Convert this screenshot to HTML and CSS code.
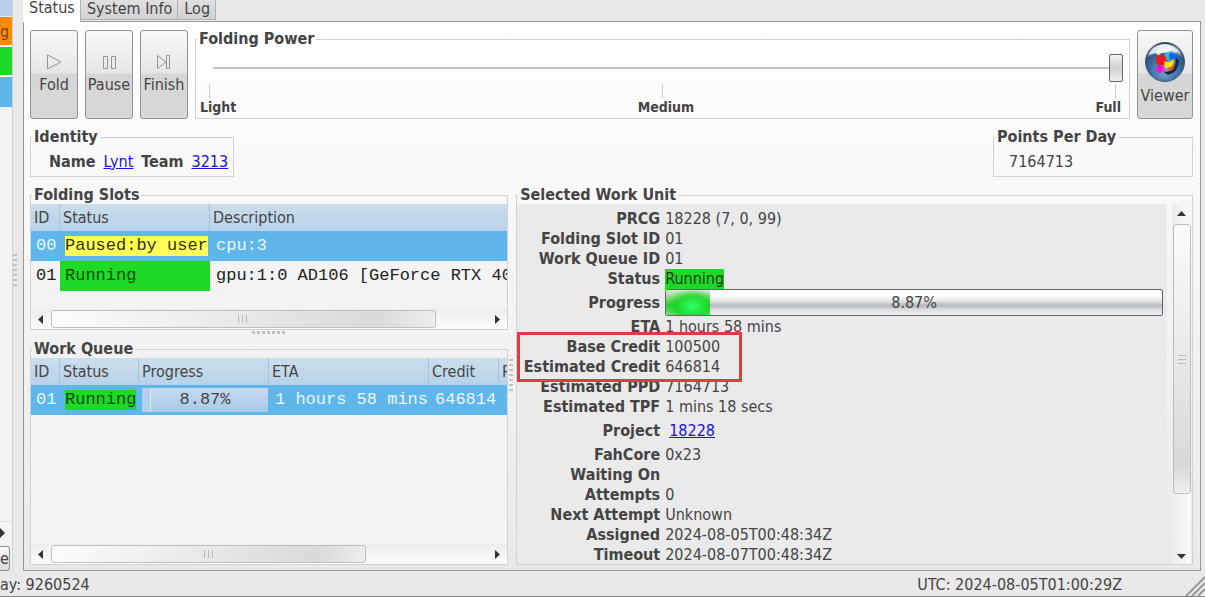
FILE: index.html
```html
<!DOCTYPE html>
<html lang="en">
<head>
<meta charset="utf-8">
<title>FAHControl</title>
<link rel="stylesheet" href="styles.css">
</head>
<body>
<div class="window">
  <div class="workspace">
    <aside class="clients">
      <div class="client-head"></div>
      <div class="client-row updating">g</div>
      <div class="client-row online"></div>
      <div class="client-row chosen"></div>
      <div class="client-fill"></div>
      <div class="client-scroll"><svg width="6" height="10" viewBox="0 0 6 10"><path d="M0 0L5 5L0 10Z" fill="#333"/></svg></div>
      <button class="client-button" type="button">e</button>
    </aside>
    <div class="splitter"><span class="grip grip-v"></span></div>
    <main class="main">
      <nav class="tabs">
        <button class="tab active" type="button">Status</button>
        <button class="tab" type="button">System Info</button>
        <button class="tab" type="button">Log</button>
      </nav>
      <div class="panel">
        <section class="toolbar">
          <button class="tool" type="button">
            <svg width="20" height="20" viewBox="0 0 20 20"><path d="M3.500 3L17 10L3.500 17Z" class="ico"/></svg>Fold</button>
          <button class="tool" type="button">
            <svg width="20" height="20" viewBox="0 0 20 20"><path d="M4.500 4.500H8.500V16.500H4.500ZM12.500 4.500H16.500V16.500H12.500Z" class="ico"/></svg>Pause</button>
          <button class="tool" type="button">
            <svg width="20" height="20" viewBox="0 0 20 20"><path d="M3.500 3.500L12 10L3.500 16.500ZM12.500 3.500H15.500V16.500H12.500Z" class="ico"/></svg>Finish</button>
          <fieldset class="group power">
            <legend>Folding Power</legend>
            <input class="slider" type="range" min="0" max="2" value="2" aria-label="Folding Power">
            <div class="ticks"><i></i><i></i><i></i></div>
            <div class="levels"><span>Light</span><span>Medium</span><span>Full</span></div>
          </fieldset>
          <button class="tool viewer" type="button">
            <svg width="42" height="42" viewBox="0 0 42 42">
              <defs>
                <radialGradient id="globe" cx=".5" cy=".7" r=".7"><stop offset="0" stop-color="#7fb2e0"/><stop offset=".5" stop-color="#3f70a8"/><stop offset="1" stop-color="#1b3558"/></radialGradient>
                <linearGradient id="shine" x2="0" y2="1"><stop offset="0" stop-color="#fff" stop-opacity=".7"/><stop offset="1" stop-color="#fff" stop-opacity=".1"/></linearGradient>
              </defs>
              <circle cx="21" cy="21" r="19.500" fill="url(#globe)" stroke="#4b5a6b"/>
              <path d="M4 14Q9 5 20 3Q31 4 37 13L33 11L30 13L27 9L22 12L18 11L15 15L11 12L8 13Z" fill="#c5d6df"/>
              <path d="M12 12L18 6L20 9L25 5L29 9L24 11L20 12Z" fill="#fff"/>
              <path d="M15 28Q20 33 28 29Q34 23 31 14L35 20Q34 32 24 34Z" fill="#142a3c"/>
              <circle cx="25" cy="15" r="4.500" fill="#28b9ee"/><circle cx="29" cy="15" r="4" fill="#1265e6"/>
              <circle cx="17" cy="19" r="5.500" fill="#ed1822"/>
              <path d="M20 20Q24 23 30 18Q31 27 21 27Z" fill="#ffe40a"/>
              <circle cx="16" cy="28" r="4" fill="#ee17cf"/><circle cx="20" cy="29" r="2" fill="#f33ec0"/>
              <path d="M24 27Q29 26 30 22Q31 29 25 30Z" fill="#e8561a"/>
              <path d="M3 17Q6 3 21 3Q36 3 39 17Q21 5 3 17Z" fill="url(#shine)"/>
            </svg>Viewer</button>
        </section>

        <section class="summary">
          <fieldset class="group identity">
            <legend>Identity</legend>
            <div class="line"><b>Name</b><a href="#">Lynt</a><b>Team</b><a href="#">3213</a></div>
          </fieldset>
          <fieldset class="group ppd">
            <legend>Points Per Day</legend>
            <div class="line">7164713</div>
          </fieldset>
        </section>

        <section class="details">
          <div class="lists">
            <fieldset class="group slots">
              <legend>Folding Slots</legend>
              <div class="list">
                <table>
                  <colgroup><col class="c-id"><col class="c-slot"><col></colgroup>
                  <thead><tr><th>ID</th><th>Status</th><th>Description</th></tr></thead>
                  <tbody>
                    <tr class="selected"><td>00</td><td><span class="tag paused">Paused:by user</span></td><td>cpu:3</td></tr>
                    <tr><td>01</td><td class="running">Running</td><td>gpu:1:0 AD106 [GeForce RTX 4060 Ti]</td></tr>
                  </tbody>
                </table>
              </div>
              <div class="hscroll">
                <svg width="6" height="9" viewBox="0 0 6 9"><path d="M5 0V9L0 4.500Z" fill="#333"/></svg>
                <div class="rail"><div class="thumb wide"><i></i></div></div>
                <svg width="6" height="9" viewBox="0 0 6 9"><path d="M1 0V9L6 4.500Z" fill="#333"/></svg>
              </div>
            </fieldset>
            <div class="row-splitter"><span class="grip grip-h"></span></div>
            <fieldset class="group queue">
              <legend>Work Queue</legend>
              <div class="list">
                <table>
                  <colgroup><col class="c-id"><col class="c-status"><col class="c-progress"><col class="c-eta"><col class="c-credit"><col></colgroup>
                  <thead><tr><th>ID</th><th>Status</th><th>Progress</th><th>ETA</th><th>Credit</th><th>PRCG</th></tr></thead>
                  <tbody>
                    <tr class="selected"><td>01</td><td><span class="tag running">Running</span></td><td class="meter-cell"><div class="cell-meter"><span>8.87%</span></div></td><td>1 hours 58 mins</td><td>646814</td><td>18228 (7, 0, 99)</td></tr>
                  </tbody>
                </table>
              </div>
              <div class="hscroll">
                <svg width="6" height="9" viewBox="0 0 6 9"><path d="M5 0V9L0 4.500Z" fill="#333"/></svg>
                <div class="rail"><div class="thumb narrow"><i></i></div></div>
                <svg width="6" height="9" viewBox="0 0 6 9"><path d="M1 0V9L6 4.500Z" fill="#333"/></svg>
              </div>
            </fieldset>
          </div>
          <div class="column-splitter"><span class="grip grip-v"></span></div>
          <fieldset class="group unit">
            <legend>Selected Work Unit</legend>
            <div class="unit-body">
              <dl class="facts">
                <dt>PRCG</dt><dd>18228 (7, 0, 99)</dd>
                <dt>Folding Slot ID</dt><dd>01</dd>
                <dt>Work Queue ID</dt><dd>01</dd>
                <dt>Status</dt><dd><span class="badge">Running</span></dd>
                <dt class="tall">Progress</dt><dd class="tall"><div class="progress"><div class="progress-fill" style="width:8.87%"></div><span>8.87%</span></div></dd>
                <dt>ETA</dt><dd>1 hours 58 mins</dd>
                <dt>Base Credit</dt><dd>100500</dd>
                <dt>Estimated Credit</dt><dd>646814</dd>
                <dt>Estimated PPD</dt><dd>7164713</dd>
                <dt>Estimated TPF</dt><dd>1 mins 18 secs</dd>
                <dt class="tall">Project</dt><dd class="tall project"><a href="#">18228</a></dd>
                <dt>FahCore</dt><dd>0x23</dd>
                <dt>Waiting On</dt><dd></dd>
                <dt>Attempts</dt><dd>0</dd>
                <dt>Next Attempt</dt><dd>Unknown</dd>
                <dt>Assigned</dt><dd>2024-08-05T00:48:34Z</dd>
                <dt>Timeout</dt><dd>2024-08-07T00:48:34Z</dd>
              </dl>
              <div class="vscroll">
                <svg width="9" height="5" viewBox="0 0 9 5"><path d="M0 5H9L4.500 0Z" fill="#333"/></svg>
                <div class="vrail"><div class="vthumb"><i></i></div></div>
                <svg width="9" height="5" viewBox="0 0 9 5"><path d="M0 0H9L4.500 5Z" fill="#333"/></svg>
              </div>
              <div class="highlight"></div>
            </div>
          </fieldset>
        </section>
      </div>
    </main>
  </div>
  <footer class="statusbar">
    <span>ay: 9260524</span><span>UTC: 2024-08-05T01:00:29Z</span>
    <svg class="resize" width="20" height="20" viewBox="0 0 20 20"><path d="M1 20L20 1M7 20L20 7M13 20L20 13" stroke="#999" stroke-width="2"/></svg>
  </footer>
</div>
</body>
</html>
```
FILE: styles.css
```css
* { box-sizing: border-box; }
body {
  margin: 0;
  color: #444;
  background: #e9e9e9;
  font: 16px/20px "DejaVu Sans Condensed", "Noto Sans", sans-serif;
}
button { font: inherit; color: inherit; padding: 0; }
a { color: #1a12d8; }
svg { display: block; flex: none; }

.window { display: flex; flex-direction: column; height: 100vh; overflow: hidden; }
.workspace { display: flex; flex: 1; min-height: 0; }

/* Client list, cut by the left edge */
.clients { display: flex; flex-direction: column; flex: none; width: 12px; background: #f3f3f3; }
.client-head { height: 17px; background: #b8cfe9; border-bottom: 1px solid #e8e8e8; }
.client-row { height: 30px; line-height: 30px; border-bottom: 2px solid #f5f5f5; }
.updating { background: #ff8a05; color: #7a4300; }
.online { background: #1fd927; }
.chosen { background: #5fb6eb; border: 0; }
.client-fill { flex: 1; border-bottom: 1px solid #ddd; }
.client-scroll { height: 24px; padding-top: 6px; }
.client-button {
  height: 25px;
  width: 10px;
  background: linear-gradient(#f8f8f8, #dcdcdc);
  border: 1px solid #8d8d8d;
  border-left: 0;
  border-radius: 0 3px 3px 0;
}
.splitter {
  display: flex;
  align-items: center;
  flex: none;
  width: 11px;
  padding-bottom: 30px;
  border-left: 1px solid #d0d0d0;
}
.grip { display: block; flex: none; }
.grip-v { width: 4px; height: 34px; background: repeating-linear-gradient(#c2c2bb 0 2px, transparent 2px 5px); }
.grip-h { width: 35px; height: 3px; background: repeating-linear-gradient(90deg, #c2c2bb 0 3px, transparent 3px 5px); }

/* Tabs */
.main { display: flex; flex-direction: column; flex: 1; min-width: 0; margin-right: 4px; }
.tabs { display: flex; height: 21px; align-items: flex-start; }
.tab {
  height: 20px;
  padding: 0 5px 3px 6px;
  line-height: 17px;
  white-space: nowrap;
  background: linear-gradient(#e0e0e0, #d2d2d2);
  border: solid #b0b0b0;
  border-width: 0 1px 1px 0;
}
.tab.active { height: 22px; padding-bottom: 7px; line-height: 15px; background: #fff; border-width: 0 1px 0 0; z-index: 1; }
.panel {
  display: flex;
  flex-direction: column;
  flex: 1;
  min-height: 0;
  padding: 8px 7px 5px 6px;
  gap: 9px;
  background: linear-gradient(#fff, #f3f3f3 55%, #e9e9e9);
  border: 1px solid #999;
}

/* Group boxes */
.group { min-width: 0; margin: 0; padding: 0; border: 1px solid #d2d2d2; }
.group legend { margin-left: 1px; padding: 0 2px; line-height: 18px; font-weight: bold; }

/* Toolbar */
.toolbar { display: flex; gap: 7px; height: 89px; }
.tool {
  display: flex;
  flex-direction: column;
  align-items: center;
  justify-content: center;
  gap: 3px;
  flex: none;
  width: 48px;
  padding-bottom: 2px;
  background: linear-gradient(#f8f8f8, #e6e6e6 48%, #d6d6d6 50%, #d8d8d8);
  border: 1px solid #929292;
  border-radius: 3px;
}
.viewer { width: 56px; }
.ico { fill: none; stroke: #949494; stroke-width: 1; }
.power { flex: 1; }
.slider {
  display: block;
  appearance: none;
  width: calc(100% - 17px);
  height: 28px;
  margin: 6px 6px 0 11px;
  background: transparent;
}
.slider::-webkit-slider-runnable-track { height: 28px; background: linear-gradient(#c2c2c2, #c2c2c2) 6px 50% / 100% 2px no-repeat; }
.slider::-webkit-slider-thumb {
  appearance: none;
  width: 14px;
  height: 28px;
  background: linear-gradient(#f4f4f4, #d0d0d0 50%, #f0f0f0);
  border: 1px solid #666;
  border-radius: 2px;
}
.ticks { display: flex; justify-content: space-between; height: 14px; margin: 2px 13px 0; }
.ticks i { width: 1px; background: #ccc; }
.levels { display: flex; justify-content: space-between; margin: 0 8px 0 4px; font-size: 14px; line-height: 18px; font-weight: bold; }

/* Identity and points */
.summary { display: flex; justify-content: space-between; }
.line { display: flex; gap: 8px; height: 30px; line-height: 32px; }
.identity .line { padding: 0 5px 0 18px; }
.ppd { width: 200px; }
.ppd .line { padding-left: 15px; }

/* Lists */
.details { display: flex; flex: 1; min-height: 0; }
.lists { display: flex; flex-direction: column; flex: 479 1 0; min-width: 0; }
.list { height: 105px; overflow: hidden; background: #f3f3f3; }
.queue { display: flex; flex-direction: column; flex: 1; min-height: 0; }
.queue .list { flex: 1; height: auto; }
.row-splitter { display: flex; justify-content: center; height: 10px; padding-top: 1px; }
table { table-layout: fixed; width: 100%; border-spacing: 0; }
.c-id { width: 29px; }
.c-slot { width: 150px; }
.c-status { width: 79px; }
.c-progress { width: 130px; }
.c-eta { width: 160px; }
.c-credit { width: 70px; }
th {
  height: 27px;
  padding: 0 0 0 3px;
  overflow: hidden;
  text-align: left;
  font-weight: normal;
  white-space: nowrap;
  background: linear-gradient(#cbdeea, #b8d2ea);
  border-right: 1px solid #a9c2d8;
}
th:last-child { border-right: 0; }
td {
  height: 30px;
  padding: 0 0 0 6px;
  overflow: hidden;
  white-space: nowrap;
  color: #222;
  font: 17px/20px "Liberation Mono", monospace;
}
td:first-child { padding-left: 5px; }
td:nth-child(2) { padding-left: 5px; }
.selected td { background: #5fb6eb; color: #e9f8ff; }
.tag { display: inline-block; }
.paused { background: #ffff58; color: #333300; }
td.running, .tag.running { background: #1fd927; color: #074c0a; }
td.meter-cell { padding: 0 1px 0 3px; }
.cell-meter {
  height: 24px;
  line-height: 24px;
  text-align: center;
  color: #444;
  background: linear-gradient(90deg, #b3d0ec 8px, #dbe8f4 8px 9px, transparent 9px), linear-gradient(#c4d9ee, #a9c9e9);
}

/* Scroll bars */
.hscroll { display: flex; align-items: center; gap: 9px; flex: none; height: 20px; padding: 0 7px; background: linear-gradient(#ededed, #fcfcfc); }
.rail { flex: 1; height: 18px; }
.thumb, .vthumb { display: flex; align-items: center; justify-content: center; border: 1px solid #bfbfbf; border-radius: 3px; }
.thumb { height: 18px; margin-left: -2px; background: linear-gradient(90deg, #fcfcfc, #dadada 85%, #ededed); }
.thumb.wide { width: 89%; }
.thumb.narrow { width: 73%; }
.thumb i { width: 10px; height: 8px; background: repeating-linear-gradient(90deg, #bbb 0 1px, transparent 1px 4px); }
.vscroll { display: flex; flex-direction: column; align-items: center; gap: 8px; flex: none; width: 19px; margin: 0 1px 0 5px; padding: 7px 0 5px; background: linear-gradient(90deg, #ececec, #fafafa); }
.vrail { flex: 1; width: 18px; }
.vthumb { height: 84%; background: linear-gradient(#fbfbfb, #d9d9d9 90%, #eee); }
.vthumb i { width: 8px; height: 9px; background: repeating-linear-gradient(#bbb 0 1px, transparent 1px 4px); }

/* Selected work unit */
.column-splitter { display: flex; align-items: center; flex: none; width: 8px; padding-left: 1px; }
.unit { display: flex; flex-direction: column; flex: 676 1 0; }
.unit-body { position: relative; display: flex; flex: 1; min-height: 0; }
.facts {
  display: grid;
  grid-template-columns: 139px 1fr;
  column-gap: 5px;
  align-content: start;
  flex: 1;
  min-width: 0;
  margin: 0;
  padding: 5px 4px 0;
  overflow: hidden;
  background: #eaeaea;
}
dt { height: 20px; text-align: right; font-weight: bold; white-space: nowrap; }
dd { height: 20px; margin: 0; white-space: nowrap; }
.tall { height: 28px; line-height: 28px; }
.project { padding-left: 4px; }
.badge { display: inline-block; background: #1fd927; color: #073f0a; }
.progress {
  display: grid;
  height: 27px;
  line-height: 25px;
  text-align: center;
  background: linear-gradient(#fff 20%, #ececec 40%, #b7bbbe 62%, #dde0e1 80%, #eee);
  border: 1px solid #666;
  border-radius: 2px;
}
.progress > * { grid-area: 1 / 1; }
.progress-fill { background: radial-gradient(ellipse at 60% 65%, #31ff68, #15d524cc 45%, transparent 75%), linear-gradient(#d5ecd3, #7fdc80 35%, #2fc935 60%, #7be57c); }
.highlight {
  position: absolute;
  left: 0;
  top: 128px;
  width: 225px;
  height: 50px;
  border: 3px solid #dc3c42;
}

/* Status bar */
.statusbar {
  position: relative;
  display: flex;
  justify-content: space-between;
  flex: none;
  height: 26px;
  padding: 4px 83px 0 0;
  border-bottom: 1px solid #788a80;
}
.resize { position: absolute; right: 0; bottom: 0; }
```
